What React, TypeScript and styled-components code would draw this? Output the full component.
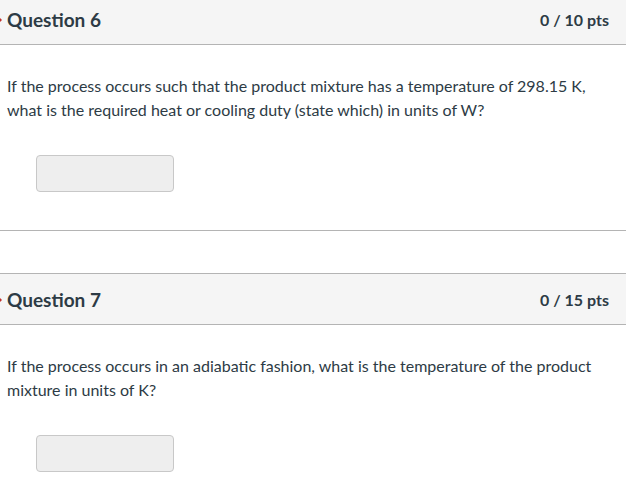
import React from "react";
import styled, { createGlobalStyle } from "styled-components";

const GlobalStyle = createGlobalStyle`
  html, body {
    margin: 0;
    padding: 0;
    background: #ffffff;
    overflow: hidden;
  }
  body {
    font-family: Lato, "Liberation Sans", sans-serif;
    color: #2d3b45;
  }
`;

const questions = [
  {
    name: "Question 6",
    points: "0 / 10 pts",
    text: "If the process occurs such that the product mixture has a temperature of 298.15 K, what is the required heat or cooling duty (state which) in units of W?",
  },
  {
    name: "Question 7",
    points: "0 / 15 pts",
    text: "If the process occurs in an adiabatic fashion, what is the temperature of the product mixture in units of K?",
  },
];

function App() {
  return (
    <Page>
      <GlobalStyle />
      {questions.map((q, i) => (
        <QuestionCard key={q.name} $first={i === 0}>
          <Header>
            <Flag />
            <Name>{q.name}</Name>
            <Points>{q.points}</Points>
          </Header>
          <Body>
            <QuestionText>{q.text}</QuestionText>
            <AnswerInput type="text" aria-label={q.name} />
          </Body>
        </QuestionCard>
      ))}
    </Page>
  );
}

const Page = styled.div`
  display: flex;
  flex-direction: column;
  gap: 42px;
  width: 100%;
  height: 100vh;
  box-sizing: border-box;
`;

const QuestionCard = styled.div<{ $first?: boolean }>`
  display: flex;
  flex-direction: column;
  border-top: ${(p) => (p.$first ? "none" : "1px solid #b4b4b4")};
  border-bottom: 1px solid #b4b4b4;
  margin-top: ${(p) => (p.$first ? "-6px" : "0")};
`;

const Header = styled.div`
  position: relative;
  display: flex;
  align-items: center;
  justify-content: space-between;
  height: 50px;
  padding: 0 17px 0 7px;
  background: #f5f5f5;
  border-bottom: 1px solid #b4b4b4;
`;

const Flag = styled.span`
  position: absolute;
  left: 0;
  top: 24px;
  width: 0;
  height: 0;
  border-top: 2px solid transparent;
  border-bottom: 2px solid transparent;
  border-left: 2px solid #c2302c;
`;

const Name = styled.div`
  font-size: 19px;
  font-weight: 700;
  color: #2d3b45;
`;

const Points = styled.div`
  font-size: 16px;
  font-weight: 700;
  color: #2d3b45;
`;

const Body = styled.div`
  display: flex;
  flex-direction: column;
  align-items: flex-start;
  padding: 29px 7px 38px 7px;
`;

const QuestionText = styled.p`
  margin: 0;
  font-size: 16px;
  line-height: 24px;
  color: #2d3b45;
  max-width: 600px;
`;

const AnswerInput = styled.input`
  margin: 33px 0 0 29px;
  width: 138px;
  height: 37px;
  box-sizing: border-box;
  background: #eeeeee;
  border: 1px solid #c8c8c8;
  border-radius: 4px;
  outline: none;
`;

export default App;
